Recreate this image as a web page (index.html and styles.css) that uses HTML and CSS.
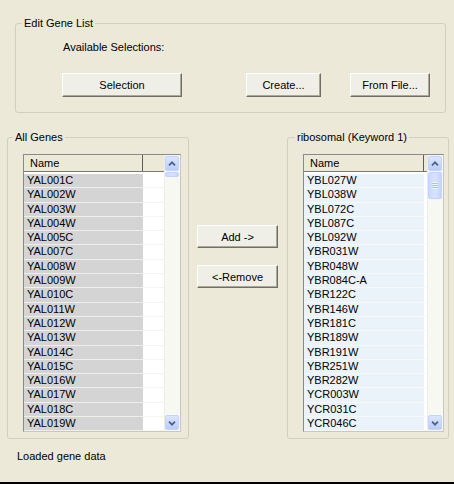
FILE: index.html
```html
<!DOCTYPE html>
<html>
<head>
<meta charset="utf-8">
<link rel="stylesheet" href="styles.css">
</head>
<body>
<div class="window">
  <div class="group top-group">
    <span class="group-title">Edit Gene List</span>
    <div class="avail">Available Selections:</div>
    <div class="btn-row">
      <div class="btn b-sel">Selection</div>
      <div class="btn b-create">Create...</div>
      <div class="btn b-file">From File...</div>
    </div>
  </div>

  <div class="middle">
    <div class="group left-group">
      <span class="group-title">All Genes</span>
      <div class="list list-left">
        <div class="list-main">
          <div class="hdr"><div class="hdr-name">Name</div><div class="hdr-rest"></div></div>
          <div class="rows">
            <div class="row"><div class="cell">YAL001C</div><div class="rest"></div></div>
            <div class="row"><div class="cell">YAL002W</div><div class="rest"></div></div>
            <div class="row"><div class="cell">YAL003W</div><div class="rest"></div></div>
            <div class="row"><div class="cell">YAL004W</div><div class="rest"></div></div>
            <div class="row"><div class="cell">YAL005C</div><div class="rest"></div></div>
            <div class="row"><div class="cell">YAL007C</div><div class="rest"></div></div>
            <div class="row"><div class="cell">YAL008W</div><div class="rest"></div></div>
            <div class="row"><div class="cell">YAL009W</div><div class="rest"></div></div>
            <div class="row"><div class="cell">YAL010C</div><div class="rest"></div></div>
            <div class="row"><div class="cell">YAL011W</div><div class="rest"></div></div>
            <div class="row"><div class="cell">YAL012W</div><div class="rest"></div></div>
            <div class="row"><div class="cell">YAL013W</div><div class="rest"></div></div>
            <div class="row"><div class="cell">YAL014C</div><div class="rest"></div></div>
            <div class="row"><div class="cell">YAL015C</div><div class="rest"></div></div>
            <div class="row"><div class="cell">YAL016W</div><div class="rest"></div></div>
            <div class="row"><div class="cell">YAL017W</div><div class="rest"></div></div>
            <div class="row"><div class="cell">YAL018C</div><div class="rest"></div></div>
            <div class="row"><div class="cell">YAL019W</div><div class="rest"></div></div>
            <div class="row"><div class="cell">YAL020C</div><div class="rest"></div></div>
          </div>
        </div>
        <div class="sb">
          <div class="sb-btn"><svg width="14" height="14" viewBox="0 0 14 14"><polyline points="3.5,8.5 7,5 10.5,8.5" fill="none" stroke="#4D6185" stroke-width="2"/></svg></div>
          <div class="thumb thumb-small"></div>
          <div class="track"></div>
          <div class="sb-btn"><svg width="14" height="14" viewBox="0 0 14 14"><polyline points="3.5,5.5 7,9 10.5,5.5" fill="none" stroke="#4D6185" stroke-width="2"/></svg></div>
        </div>
      </div>
    </div>

    <div class="mid">
      <div class="btn b-mid b-add">Add -&gt;</div>
      <div class="btn b-mid b-remove">&lt;-Remove</div>
    </div>

    <div class="group right-group">
      <span class="group-title">ribosomal (Keyword 1)</span>
      <div class="list list-right">
        <div class="list-main">
          <div class="hdr"><div class="hdr-name">Name</div><div class="hdr-rest"></div></div>
          <div class="rows">
            <div class="row"><div class="cell">YBL027W</div><div class="rest"></div></div>
            <div class="row"><div class="cell">YBL038W</div><div class="rest"></div></div>
            <div class="row"><div class="cell">YBL072C</div><div class="rest"></div></div>
            <div class="row"><div class="cell">YBL087C</div><div class="rest"></div></div>
            <div class="row"><div class="cell">YBL092W</div><div class="rest"></div></div>
            <div class="row"><div class="cell">YBR031W</div><div class="rest"></div></div>
            <div class="row"><div class="cell">YBR048W</div><div class="rest"></div></div>
            <div class="row"><div class="cell">YBR084C-A</div><div class="rest"></div></div>
            <div class="row"><div class="cell">YBR122C</div><div class="rest"></div></div>
            <div class="row"><div class="cell">YBR146W</div><div class="rest"></div></div>
            <div class="row"><div class="cell">YBR181C</div><div class="rest"></div></div>
            <div class="row"><div class="cell">YBR189W</div><div class="rest"></div></div>
            <div class="row"><div class="cell">YBR191W</div><div class="rest"></div></div>
            <div class="row"><div class="cell">YBR251W</div><div class="rest"></div></div>
            <div class="row"><div class="cell">YBR282W</div><div class="rest"></div></div>
            <div class="row"><div class="cell">YCR003W</div><div class="rest"></div></div>
            <div class="row"><div class="cell">YCR031C</div><div class="rest"></div></div>
            <div class="row"><div class="cell">YCR046C</div><div class="rest"></div></div>
            <div class="row"><div class="cell">YDL061C</div><div class="rest"></div></div>
          </div>
        </div>
        <div class="sb">
          <div class="sb-btn"><svg width="14" height="14" viewBox="0 0 14 14"><polyline points="3.5,8.5 7,5 10.5,8.5" fill="none" stroke="#4D6185" stroke-width="2"/></svg></div>
          <div class="thumb thumb-big"><div class="grip"></div></div>
          <div class="track"></div>
          <div class="sb-btn"><svg width="14" height="14" viewBox="0 0 14 14"><polyline points="3.5,5.5 7,9 10.5,5.5" fill="none" stroke="#4D6185" stroke-width="2"/></svg></div>
        </div>
      </div>
    </div>
  </div>

  <div class="status">Loaded gene data</div>
</div>
</body>
</html>
```

FILE: styles.css
```css
html, body {
  margin: 0;
  padding: 0;
}
body {
  background: #ECE9D8;
  font-family: "Liberation Sans", Arial, sans-serif;
  font-size: 11px;
  color: #000;
}
.window {
  width: 454px;
  height: 484px;
  box-sizing: border-box;
  padding-top: 23px;
  border-bottom: 2px solid #000;
  overflow: hidden;
}
.group {
  position: relative;
  box-sizing: border-box;
  border: 1px solid #D0D0BF;
  border-radius: 3px;
}
.group-title {
  position: absolute;
  top: -7px;
  left: 6px;
  padding: 0 2px;
  line-height: 13px;
  background: #ECE9D8;
  white-space: nowrap;
}
.right-group .group-title { left: 7px; }
.left-group .group-title { left: 5px; }
.top-group {
  margin-left: 15px;
  width: 431px;
  height: 90px;
}
.avail {
  margin: 17px 0 0 47px;
  line-height: 13px;
}
.btn-row {
  display: flex;
  margin-top: 19px;
  padding-left: 46px;
}
.btn {
  box-sizing: border-box;
  height: 24px;
  display: flex;
  align-items: center;
  justify-content: center;
  background: #F0EFE7;
  border: 1px solid;
  border-color: #FFFFFF #716F64 #716F64 #FFFFFF;
  box-shadow: inset -1px -1px 0 #ACA899;
}
.b-sel { width: 120px; }
.b-create { width: 75px; margin-left: 64px; }
.b-file { width: 80px; margin-left: 29px; }

.middle {
  display: flex;
  margin-top: 24px;
  height: 302px;
}
.left-group {
  margin-left: 7px;
  width: 182px;
  height: 302px;
}
.right-group {
  width: 162px;
  height: 302px;
}
.mid {
  width: 98px;
  padding-left: 8px;
  padding-top: 88px;
  box-sizing: border-box;
}
.b-mid {
  width: 81px;
  height: 23px;
}
.b-remove {
  margin-top: 17px;
}

.list {
  display: flex;
  box-sizing: border-box;
  height: 278px;
  margin: 16px 0 0 15px;
  border: 1px solid;
  border-color: #8A8A8A #C8C8C0 #C8C8C0 #8A8A8A;
  background: #FFFFFF;
}
.list-left { width: 158px; --col: 119px; }
.list-right { width: 141px; --col: 120px; }
.list-main {
  flex: 1;
  overflow: hidden;
  display: flex;
  flex-direction: column;
}
.hdr {
  display: flex;
  height: 17px;
  box-sizing: border-box;
  background: #ECE9D8;
  border-bottom: 1px solid #7A7A70;
  flex: none;
}
.hdr-name {
  border-right: 1px solid #5E5E58;
  padding-left: 6px;
  line-height: 17px;
}
.list-left .hdr-name { width: 112px; }
.list-right .hdr-name { width: 113px; }
.hdr-rest { flex: 1; }
.rows {
  flex: 1;
  overflow: hidden;
  padding-top: 2px;
}
.row {
  display: flex;
  height: 14.3px;
}
.cell {
  width: var(--col);
  box-sizing: border-box;
  padding-left: 3px;
  line-height: 13.3px;
  white-space: nowrap;
  overflow: hidden;
}
.rest { flex: 1; }
.list-left .cell {
  background: #D4D4D4;
  border-bottom: 1px solid #EEEEEE;
}
.list-left .rest {
  border-bottom: 1px solid #F4F4F4;
}
.list-right .cell {
  background: #EAF2FA;
  border-bottom: 1px solid #F7FAFD;
}
.list-right .rest {
  border-bottom: 1px solid #F7F9FC;
}

.sb {
  width: 16px;
  flex: none;
  display: flex;
  flex-direction: column;
  background: #F8F8F3;
  border-left: 1px solid #EEEDE5;
  box-sizing: border-box;
  padding: 1px 1px 1px 0;
}
.sb-btn {
  height: 15px;
  width: 14px;
  box-sizing: border-box;
  border: 1px solid #C3D3FD;
  border-radius: 2px;
  background: linear-gradient(#DCE6FE, #B9CDFA);
  display: flex;
  align-items: center;
  justify-content: center;
  flex: none;
}
.sb-btn svg { display: block; }
.thumb {
  width: 14px;
  box-sizing: border-box;
  border: 1px solid #C3D3FD;
  border-radius: 2px;
  background: linear-gradient(90deg, #C9D8FC, #D8E3FE 50%, #C4D4FB);
  flex: none;
  margin-top: 1px;
}
.thumb-small { height: 5px; }
.thumb-big {
  height: 27px;
  display: flex;
  align-items: center;
  justify-content: center;
}
.grip {
  width: 6px;
  height: 7px;
  background: repeating-linear-gradient(#EEF4FE 0 1px, #A8C0F4 1px 2px);
}
.track { flex: 1; }

.status {
  margin-top: 11px;
  padding-left: 17px;
  line-height: 13px;
}
```
